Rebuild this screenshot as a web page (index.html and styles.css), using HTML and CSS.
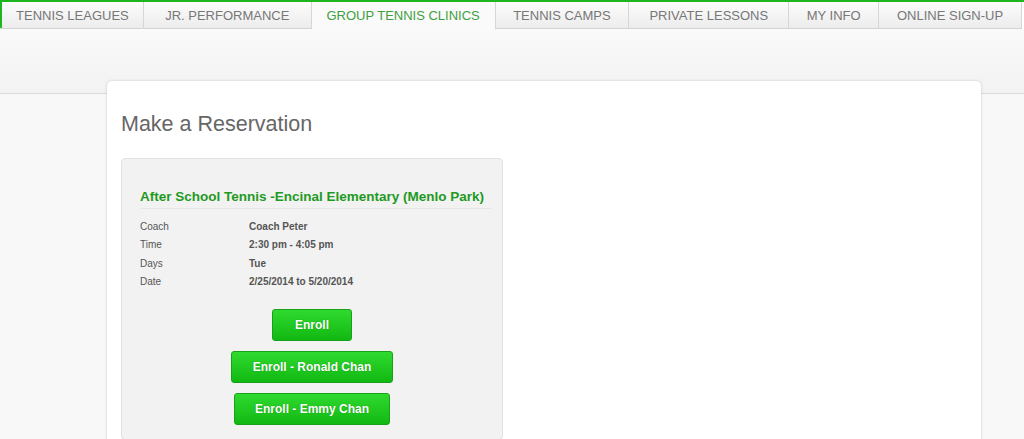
FILE: index.html
```html
<!DOCTYPE html>
<html lang="en">
<head>
    <meta charset="UTF-8">
    <title>Make a Reservation</title>
    <link rel="stylesheet" href="styles.css">
</head>
<body>
    <div class="nav">
        <a class="tab first">TENNIS LEAGUES</a>
        <a class="tab">JR. PERFORMANCE</a>
        <a class="tab active">GROUP TENNIS CLINICS</a>
        <a class="tab">TENNIS CAMPS</a>
        <a class="tab">PRIVATE LESSONS</a>
        <a class="tab">MY INFO</a>
        <a class="tab">ONLINE SIGN-UP</a>
    </div>
    <div class="band"></div>
    <div class="page">
        <h1>Make a Reservation</h1>
        <div class="clinic">
            <h3>After School Tennis -Encinal Elementary (Menlo Park)</h3>
            <table class="info">
                <tr><td class="lbl">Coach</td><td>Coach Peter</td></tr>
                <tr><td class="lbl">Time</td><td>2:30 pm - 4:05 pm</td></tr>
                <tr><td class="lbl">Days</td><td>Tue</td></tr>
                <tr><td class="lbl">Date</td><td>2/25/2014 to 5/20/2014</td></tr>
            </table>
            <div class="actions">
                <button class="enroll e1">Enroll</button>
                <button class="enroll e2">Enroll - Ronald Chan</button>
                <button class="enroll e3">Enroll - Emmy Chan</button>
            </div>
        </div>
    </div>
</body>
</html>
```

FILE: styles.css
```css
body { margin: 0; font-family: "Liberation Sans", Arial, sans-serif; background: #f8f8f8; }
.nav { display: flex; height: 27px; border-top: 2px solid #1eb51e; background: #fff; padding-right: 2px; }
.tab { display: flex; align-items: center; justify-content: center; height: 26px; font-size: 13px; color: #777; background: linear-gradient(#fcfcfc, #ececec); border-right: 1px solid #d6d6d6; border-bottom: 1px solid #d4d4d4; }
.tab.first { width: 141px; border-left: 2px solid #1eb51e; border-bottom-left-radius: 2px; }
.tab:nth-child(2) { width: 167px; }
.tab.active { width: 183px; color: #3f9f3f; background: #fafafa; border-bottom: 1px solid #fafafa; height: 27px; }
.tab:nth-child(4) { width: 133px; }
.tab:nth-child(5) { width: 159px; }
.tab:nth-child(6) { width: 89px; }
.tab:nth-child(7) { width: 142px; }
.band { height: 64px; background: linear-gradient(#fafafa, #f2f2f2); border-bottom: 1px solid #dcdcdc; }
.page { width: 846px; margin: -13px 0 0 107px; position: relative; background: #fff; border-radius: 5px; box-shadow: 0 0 3px rgba(0, 0, 0, 0.18); padding: 31px 14px 20px; }
h1 { margin: 0 0 21px; font-size: 21.5px; font-weight: normal; color: #666; }
.clinic { width: 380px; background: #f2f2f2; border: 1px solid #e2e2e2; border-radius: 4px; padding: 30px 0 14px; }
.clinic h3 { margin: 0 10px 0 18px; padding-bottom: 4px; font-size: 13.5px; color: #1f9a1f; white-space: nowrap; border-bottom: 1px solid #e6e6e6; }
.info { margin: 8px 0 0 16px; border-collapse: collapse; font-size: 10px; color: #555; }
.info td { height: 18.5px; padding: 0 2px; font-weight: bold; }
.info td.lbl { width: 105px; font-weight: normal; color: #555; }
.actions { display: flex; flex-direction: column; align-items: center; gap: 10px; margin-top: 18px; }
.enroll { height: 32px; font-family: "Liberation Sans", Arial, sans-serif; font-size: 12px; font-weight: bold; color: #fff; text-shadow: 0 0 1px rgba(0, 80, 0, 0.5); background: linear-gradient(#2fda2f, #12b812); border: 1px solid #18a118; border-radius: 3px; cursor: pointer; }
.e1 { width: 80px; }
.e2 { width: 162px; }
.e3 { width: 156px; }
```
